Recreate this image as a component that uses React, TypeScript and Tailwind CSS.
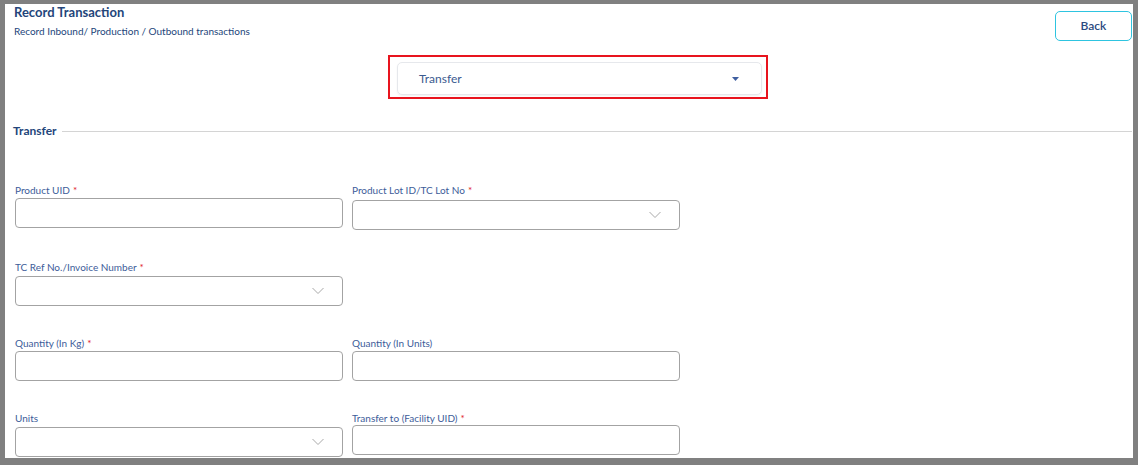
import React from "react";

const Chevron = () => (
  <svg width="12" height="7" viewBox="0 0 12 7" className="absolute right-[18px] top-1/2 -translate-y-1/2">
    <path d="M0.5 0.5 L6 6 L11.5 0.5" fill="none" stroke="#a8a8a8" strokeWidth="1" />
  </svg>
);

const Label = ({ text, req }: { text: string; req?: boolean }) => (
  <div className="text-[10px] leading-[12px] text-[#3d5c99] h-[12px] whitespace-nowrap">
    {text}
    {req && <span className="text-[#e0202a] ml-[3px]">*</span>}
  </div>
);

const Input = ({ select, mt }: { select?: boolean; mt: string }) => (
  <div className={`relative h-[30px] border border-[#a3a3a3] rounded-[4px] bg-white ${mt}`}>
    {select && <Chevron />}
  </div>
);

export default function App() {
  return (
    <div className="w-[1142px] h-[465px] bg-white" style={{ fontFamily: "Lato, 'Noto Sans', sans-serif" }}>
      <div className="w-[1138px] h-[465px] bg-[#808080] pt-[4px] pl-[5px] pr-[5px] pb-[7px]">
        <div className="w-full h-full bg-white overflow-hidden">
          {/* header */}
          <div className="flex justify-between">
            <div className="pl-[9px]">
              <div className="text-[13px] leading-[16px] font-bold text-[#23457a]">Record Transaction</div>
              <div className="text-[10px] leading-[14px] mt-[4px] text-[#23457a]">Record Inbound/ Production / Outbound transactions</div>
            </div>
            <button className="mt-[7px] mr-[1px] w-[77px] h-[30px] border border-[#2ec4e0] rounded-[5px] text-[12px] font-semibold text-[#2a4a80] bg-white">
              Back
            </button>
          </div>
          {/* red box */}
          <div className="ml-[383px] mt-[14px] w-[380px] h-[44px] border-2 border-[#e8141e] pl-[7px] pt-[5px] pr-[4px] pb-[2px]">
            <div className="relative h-[33px] border border-[#e6e8ec] rounded-[5px] shadow-[0_1px_2px_rgba(0,0,0,0.06)] flex items-center pl-[21px]">
              <span className="text-[12px] text-[#3b5a8f]">Transfer</span>
              <svg width="7" height="4" viewBox="0 0 7 4" className="absolute right-[22px] top-[14px]">
                <path d="M0 0 L7 0 L3.5 4 Z" fill="#3f5fa0" />
              </svg>
            </div>
          </div>
          {/* section */}
          <div className="flex items-center mt-[25px] pl-[8px] pr-[1px]">
            <span className="text-[12px] leading-[14px] font-bold text-[#23457a]">Transfer</span>
            <div className="flex-1 h-px bg-[#d4d4d4] ml-[5px] mt-[1px]"></div>
          </div>
          {/* fields */}
          <div className="pl-[10px] mt-[46px] grid grid-cols-[328px_328px] gap-x-[9px]">
            <div>
              <Label text="Product UID" req />
              <Input mt="mt-[2px]" />
            </div>
            <div>
              <Label text="Product Lot ID/TC Lot No" req />
              <Input select mt="mt-[4px]" />
            </div>
          </div>
          <div className="pl-[10px] mt-[31px] grid grid-cols-[328px_328px] gap-x-[9px]">
            <div>
              <Label text="TC Ref No./Invoice Number" req />
              <Input select mt="mt-[3px]" />
            </div>
            <div></div>
          </div>
          <div className="pl-[10px] mt-[31px] grid grid-cols-[328px_328px] gap-x-[9px]">
            <div>
              <Label text="Quantity (In Kg)" req />
              <Input mt="mt-[2px]" />
            </div>
            <div>
              <Label text="Quantity (In Units)" />
              <Input mt="mt-[2px]" />
            </div>
          </div>
          <div className="pl-[10px] mt-[31px] grid grid-cols-[328px_328px] gap-x-[9px]">
            <div>
              <Label text="Units" />
              <Input select mt="mt-[3px]" />
            </div>
            <div>
              <Label text="Transfer to (Facility UID)" req />
              <Input mt="mt-[1px]" />
            </div>
          </div>
        </div>
      </div>
    </div>
  );
}
